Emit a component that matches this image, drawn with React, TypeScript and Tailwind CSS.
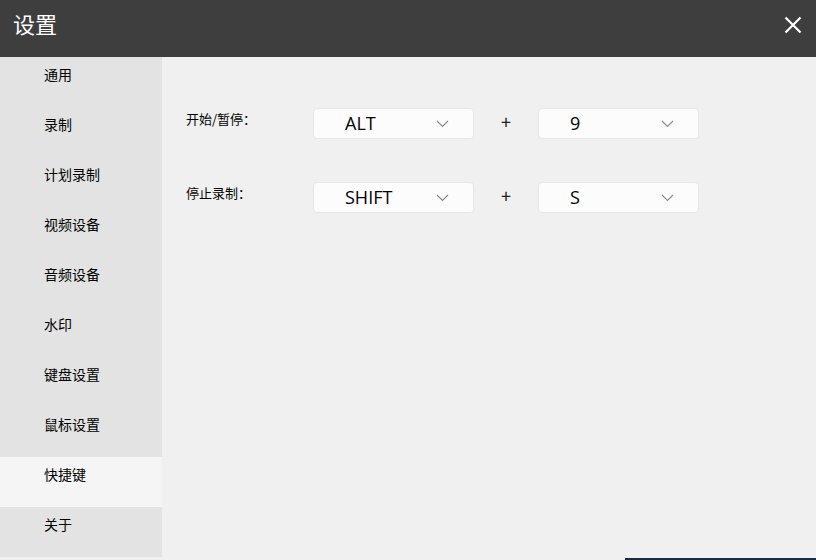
const menu = ["通用", "录制", "计划录制", "视频设备", "音频设备", "水印", "键盘设置", "鼠标设置", "快捷键", "关于"];

const cjk = { fontFamily: '"Noto Sans CJK SC", "Noto Sans", sans-serif' };

function Chevron() {
  return (
    <svg width="13" height="8" viewBox="0 0 13 8" fill="none">
      <path d="M1 1l5.5 5.5L12 1" stroke="#8a8a8a" strokeWidth="1.1" />
    </svg>
  );
}

function KeySelect({ value }: { value: string }) {
  return (
    <div className="flex h-[31px] w-[161px] items-center justify-between rounded-[4px] border border-[#e6e6e6] bg-[#fdfcfd] pl-[31px] pr-[24px]">
      <span className="text-[18px] text-black" style={{ fontFamily: '"Open Sans", sans-serif' }}>
        {value}
      </span>
      <Chevron />
    </div>
  );
}

function ShortcutRow({ label, first, second }: { label: string; first: string; second: string }) {
  return (
    <div className="flex items-center">
      <div className="w-[127px] -mt-[10px] text-[13px] text-black" style={cjk}>
        {label}
      </div>
      <KeySelect value={first} />
      <div className="w-[64px] text-center text-[18px] -mt-[4px] text-[#222]">+</div>
      <KeySelect value={second} />
    </div>
  );
}

export default function App() {
  return (
    <div className="flex h-[560px] w-[816px] flex-col overflow-hidden bg-[#f0f0f0]" style={cjk}>
      <header className="flex h-[57px] shrink-0 items-center justify-between bg-[#3e3e3e] pl-[13px] pr-[14px]">
        <h1 className="-mt-[10px] text-[22px] text-white">设置</h1>
        <svg width="18" height="18" viewBox="0 0 18 18" className="-mt-[7px]">
          <path d="M1.5 1.5l15 15M16.5 1.5l-15 15" stroke="#fff" strokeWidth="2.2" />
        </svg>
      </header>
      <div className="flex h-[500px] shrink-0">
        <nav className="flex w-[162px] flex-col bg-[#e3e3e3]">
          {menu.map((m) => (
            <div
              key={m}
              className={`h-[50px] pl-[44px] pt-[7px] text-[14px] text-black ${m === "快捷键" ? "bg-[#f5f5f5]" : ""}`}
            >
              {m}
            </div>
          ))}
        </nav>
        <main className="flex flex-1 flex-col gap-[43px] pl-[24px] pt-[51px]">
          <ShortcutRow label="开始/暂停：" first="ALT" second="9" />
          <ShortcutRow label="停止录制：" first="SHIFT" second="S" />
        </main>
      </div>
      <div className="flex flex-1 items-end justify-end">
        <div className="h-[2px] w-[191px] bg-[#1c2a48]" />
      </div>
    </div>
  );
}
